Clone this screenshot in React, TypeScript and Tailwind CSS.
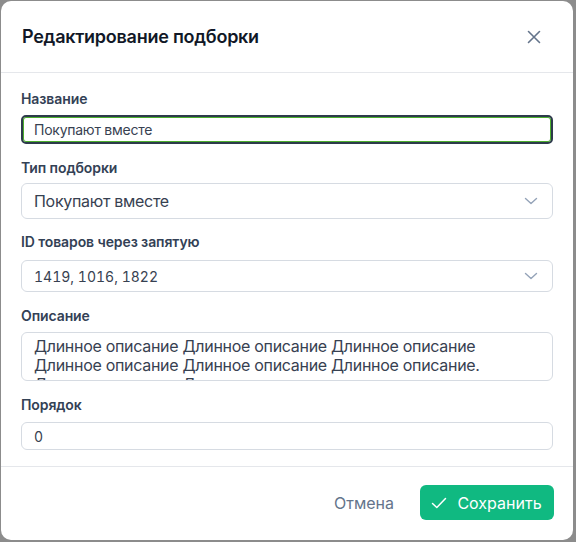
import React from "react";

const Chevron = () => (
  <svg width="16" height="16" viewBox="0 0 16 16" fill="none" className="text-[#94a3b8]">
    <path d="M2.5 5.5 L8 10.5 L13.5 5.5" stroke="currentColor" strokeWidth="1.4" strokeLinecap="round" strokeLinejoin="round" />
  </svg>
);

export default function App() {
  const font = { fontFamily: "Inter, 'Noto Sans', sans-serif" };
  return (
    <div className="w-[576px] h-[542px] bg-[#8c8c8c] pl-[1px] pt-[1px] pr-[3px] pb-[2px]" style={font}>
      <div className="w-full h-full bg-white rounded-[10px] flex flex-col overflow-hidden">
        {/* Header */}
        <div className="h-[72px] shrink-0 flex items-center justify-between pl-[21px] pr-[31px] border-b border-[#e5e7eb]">
          <h2 className="text-[18px] font-semibold text-[#111827] tracking-[-0.25px]">Редактирование подборки</h2>
          <svg width="16" height="16" viewBox="0 0 16 16" fill="none" className="text-[#64748b]">
            <path d="M2.5 2.5 L13.5 13.5 M13.5 2.5 L2.5 13.5" stroke="currentColor" strokeWidth="1.6" strokeLinecap="round" />
          </svg>
        </div>

        {/* Body */}
        <div className="flex flex-col px-[20px] pt-[16px] pb-[16px] border-b border-[#e5e7eb]">
          <label className="h-5 leading-5 text-[14px] font-semibold text-[#334155] tracking-[-0.1px] mb-[6px]">Название</label>
          <div className="h-[29px] rounded-[5px] border-2 border-[#2d3a4b] shadow-[inset_0_0_0_1px_#4caf2e] flex items-center pl-[11px] text-[14px] tracking-[-0.25px] text-[#374151]">
            Покупают вместе
          </div>

          <label className="h-5 leading-5 text-[14px] font-semibold text-[#334155] tracking-[-0.1px] mt-[14px] mb-[5px]">Тип подборки</label>
          <div className="h-[36px] rounded-[6px] border border-[#d6dbe2] flex items-center justify-between pl-[12px] pr-[13px] text-[16px] tracking-[-0.3px] text-[#374151]">
            <span>Покупают вместе</span>
            <Chevron />
          </div>

          <label className="h-5 leading-5 text-[14px] font-semibold text-[#334155] tracking-[-0.1px] mt-[13px] mb-[8px]">ID товаров через запятую</label>
          <div className="h-[32px] rounded-[6px] border border-[#d6dbe2] flex items-center justify-between pl-[12px] pr-[13px] text-[14px] tabular-nums text-[#374151]">
            <span>1419, 1016, 1822</span>
            <Chevron />
          </div>

          <label className="h-5 leading-5 text-[14px] font-semibold text-[#334155] tracking-[-0.1px] mt-[14px] mb-[6px]">Описание</label>
          <div className="h-[49px] rounded-[6px] border border-[#d6dbe2] overflow-hidden pl-[12px] pr-[13px] pt-[4px] text-[16px] leading-[19px] tracking-[-0.3px] text-[#374151]">
            Длинное описание Длинное описание Длинное описание Длинное описание Длинное описание Длинное описание. Длинное описание Длинное описание
          </div>

          <label className="h-5 leading-5 text-[14px] font-semibold text-[#334155] tracking-[-0.1px] mt-[14px] mb-[7px]">Порядок</label>
          <div className="h-[28px] rounded-[6px] border border-[#d6dbe2] flex items-center pl-[12px] text-[14px] tabular-nums text-[#374151]">
            0
          </div>
        </div>

        {/* Footer */}
        <div className="flex-1 flex items-center justify-end gap-[10px] pr-[19px] pb-[2px]">
          <button className="h-[35px] px-[16px] text-[16px] text-[#64748b]">Отмена</button>
          <button className="h-[35px] w-[134px] rounded-[6px] bg-[#10b981] text-white text-[16px] flex items-center justify-center gap-[10px] pr-[1px]">
            <svg width="16" height="16" viewBox="0 0 16 16" fill="none">
              <path d="M1.5 8.5 L5.8 12.5 L14.5 3.5" stroke="currentColor" strokeWidth="1.5" strokeLinecap="round" strokeLinejoin="round" />
            </svg>
            <span>Сохранить</span>
          </button>
        </div>
      </div>
    </div>
  );
}
